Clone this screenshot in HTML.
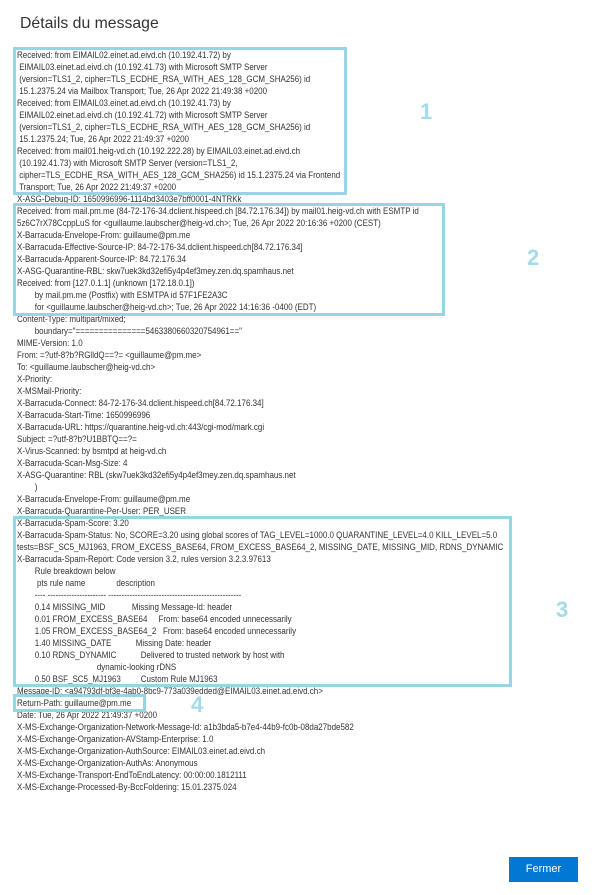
<!DOCTYPE html>
<html><head><meta charset="utf-8"><style>
html,body{margin:0;padding:0;background:#fff;width:600px;height:895px;overflow:hidden;position:relative;font-family:"Liberation Sans",sans-serif;}
h1{position:absolute;left:20px;top:15px;margin:0;font-weight:normal;font-size:15.8px;color:#333;}
.t{position:absolute;left:17px;top:50px;font-size:9.6px;line-height:12px;color:#333;white-space:pre;transform:scaleX(0.832);transform-origin:0 0;}
.b{position:absolute;border:3px solid #97d5e6;box-sizing:border-box;}
.n{position:absolute;font-size:22px;font-weight:bold;color:#a3dbeb;}
.btn{position:absolute;left:509px;top:857px;width:69px;height:25px;background:#0078d4;color:#fff;font-size:11px;text-align:center;line-height:25px;}
</style></head><body>
<h1>Détails du message</h1>
<div class="t">Received: from EIMAIL02.einet.ad.eivd.ch (10.192.41.72) by
 EIMAIL03.einet.ad.eivd.ch (10.192.41.73) with Microsoft SMTP Server
 (version=TLS1_2, cipher=TLS_ECDHE_RSA_WITH_AES_128_GCM_SHA256) id
 15.1.2375.24 via Mailbox Transport; Tue, 26 Apr 2022 21:49:38 +0200
Received: from EIMAIL03.einet.ad.eivd.ch (10.192.41.73) by
 EIMAIL02.einet.ad.eivd.ch (10.192.41.72) with Microsoft SMTP Server
 (version=TLS1_2, cipher=TLS_ECDHE_RSA_WITH_AES_128_GCM_SHA256) id
 15.1.2375.24; Tue, 26 Apr 2022 21:49:37 +0200
Received: from mail01.heig-vd.ch (10.192.222.28) by EIMAIL03.einet.ad.eivd.ch
 (10.192.41.73) with Microsoft SMTP Server (version=TLS1_2,
 cipher=TLS_ECDHE_RSA_WITH_AES_128_GCM_SHA256) id 15.1.2375.24 via Frontend
 Transport; Tue, 26 Apr 2022 21:49:37 +0200
X-ASG-Debug-ID: 1650996996-1114bd3403e7bff0001-4NTRKk
Received: from mail.pm.me (84-72-176-34.dclient.hispeed.ch [84.72.176.34]) by mail01.heig-vd.ch with ESMTP id
5z6C7rX78CcppLuS for &lt;guillaume.laubscher@heig-vd.ch&gt;; Tue, 26 Apr 2022 20:16:36 +0200 (CEST)
X-Barracuda-Envelope-From: guillaume@pm.me
X-Barracuda-Effective-Source-IP: 84-72-176-34.dclient.hispeed.ch[84.72.176.34]
X-Barracuda-Apparent-Source-IP: 84.72.176.34
X-ASG-Quarantine-RBL: skw7uek3kd32efi5y4p4ef3mey.zen.dq.spamhaus.net
Received: from [127.0.1.1] (unknown [172.18.0.1])
        by mail.pm.me (Postfix) with ESMTPA id 57F1FE2A3C
        for &lt;guillaume.laubscher@heig-vd.ch&gt;; Tue, 26 Apr 2022 14:16:36 -0400 (EDT)
Content-Type: multipart/mixed;
        boundary="===============5463380660320754961=="
MIME-Version: 1.0
From: =?utf-8?b?RGlldQ==?= &lt;guillaume@pm.me&gt;
To: &lt;guillaume.laubscher@heig-vd.ch&gt;
X-Priority:
X-MSMail-Priority:
X-Barracuda-Connect: 84-72-176-34.dclient.hispeed.ch[84.72.176.34]
X-Barracuda-Start-Time: 1650996996
X-Barracuda-URL: https://quarantine.heig-vd.ch:443/cgi-mod/mark.cgi
Subject: =?utf-8?b?U1BBTQ==?=
X-Virus-Scanned: by bsmtpd at heig-vd.ch
X-Barracuda-Scan-Msg-Size: 4
X-ASG-Quarantine: RBL (skw7uek3kd32efi5y4p4ef3mey.zen.dq.spamhaus.net
        )
X-Barracuda-Envelope-From: guillaume@pm.me
X-Barracuda-Quarantine-Per-User: PER_USER
X-Barracuda-Spam-Score: 3.20
X-Barracuda-Spam-Status: No, SCORE=3.20 using global scores of TAG_LEVEL=1000.0 QUARANTINE_LEVEL=4.0 KILL_LEVEL=5.0
tests=BSF_SC5_MJ1963, FROM_EXCESS_BASE64, FROM_EXCESS_BASE64_2, MISSING_DATE, MISSING_MID, RDNS_DYNAMIC
X-Barracuda-Spam-Report: Code version 3.2, rules version 3.2.3.97613
        Rule breakdown below
         pts rule name              description
        ---- ---------------------- --------------------------------------------------
        0.14 MISSING_MID            Missing Message-Id: header
        0.01 FROM_EXCESS_BASE64     From: base64 encoded unnecessarily
        1.05 FROM_EXCESS_BASE64_2   From: base64 encoded unnecessarily
        1.40 MISSING_DATE           Missing Date: header
        0.10 RDNS_DYNAMIC           Delivered to trusted network by host with
                                    dynamic-looking rDNS
        0.50 BSF_SC5_MJ1963         Custom Rule MJ1963
Message-ID: &lt;a94793df-bf3e-4ab0-8bc9-773a039edded@EIMAIL03.einet.ad.eivd.ch&gt;
Return-Path: guillaume@pm.me
Date: Tue, 26 Apr 2022 21:49:37 +0200
X-MS-Exchange-Organization-Network-Message-Id: a1b3bda5-b7e4-44b9-fc0b-08da27bde582
X-MS-Exchange-Organization-AVStamp-Enterprise: 1.0
X-MS-Exchange-Organization-AuthSource: EIMAIL03.einet.ad.eivd.ch
X-MS-Exchange-Organization-AuthAs: Anonymous
X-MS-Exchange-Transport-EndToEndLatency: 00:00:00.1812111
X-MS-Exchange-Processed-By-BccFoldering: 15.01.2375.024</div>
<div class="b" style="left:13px;top:47px;width:334px;height:148px"></div>
<div class="b" style="left:13px;top:203px;width:432px;height:113px"></div>
<div class="b" style="left:13px;top:516px;width:499px;height:171px"></div>
<div class="b" style="left:13px;top:694px;width:133px;height:18px"></div>
<div class="n" style="left:420px;top:99px">1</div>
<div class="n" style="left:527px;top:245px">2</div>
<div class="n" style="left:556px;top:597px">3</div>
<div class="n" style="left:191px;top:692px">4</div>
<div class="btn">Fermer</div>
</body></html>
